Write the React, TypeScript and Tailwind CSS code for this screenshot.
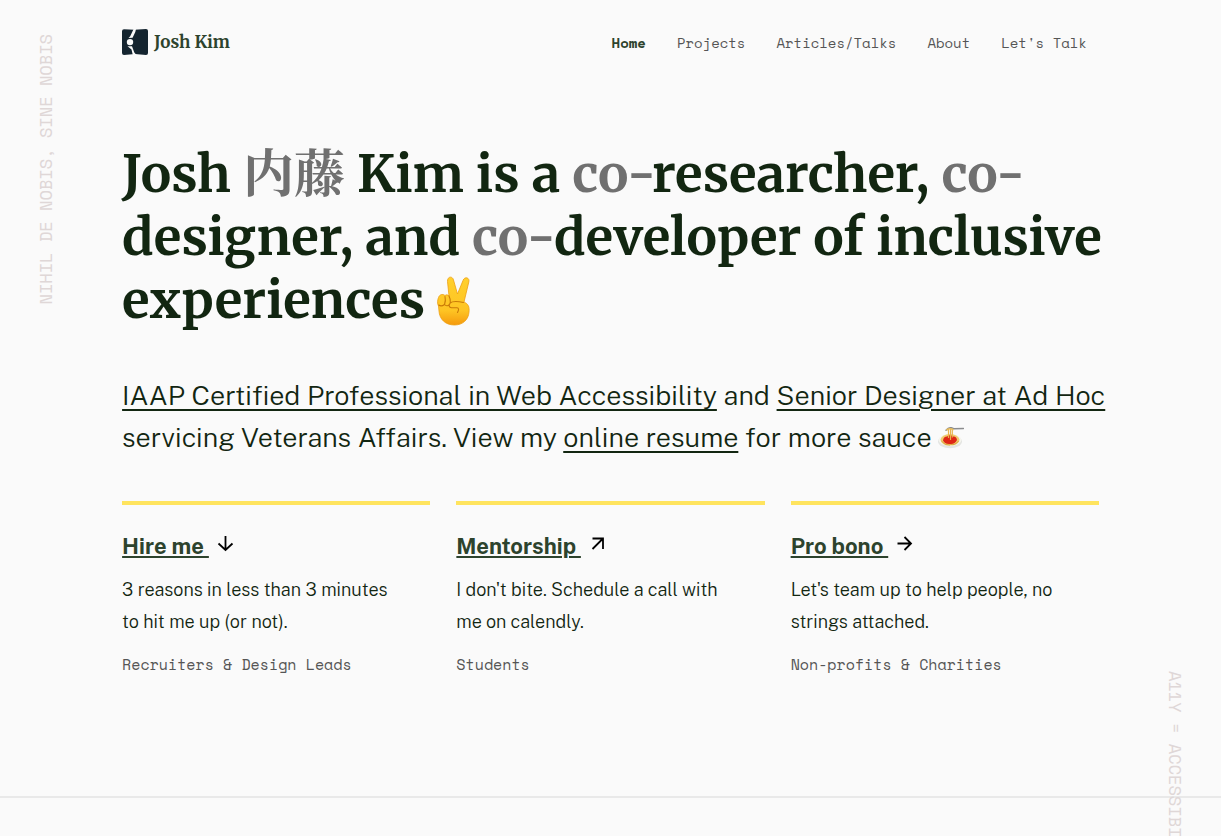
import type { ReactNode } from "react";

const navItems = [
  { label: "Home", href: "#home", current: true },
  { label: "Projects", href: "#projects", current: false },
  { label: "Articles/Talks", href: "#articles", current: false },
  { label: "About", href: "#about", current: false },
  { label: "Let's Talk", href: "#talk", current: false },
];

function Logo() {
  return (
    <svg viewBox="0 0 26 26" className="size-[26px] shrink-0" aria-hidden="true">
      <path
        fill="#14242f"
        d="M2 .3L12.500 .8L24 0Q26 0 26 2V24Q26 26 24 26L13 25L2 26Q0 26 0 24V2.300Q0 .3 2 .3Z"
      />
      <path fill="#fafafa" d="M11.600 0H14L13.300 3L10.600 8.800L6.500 9L8.200 7.300Z" />
      <path fill="#fafafa" d="M5.500 17.300H10L12.300 23.500L14.500 26H10.800L9.500 20.500Z" />
      <circle cx="8" cy="13.100" r="3.200" fill="#fafafa" />
    </svg>
  );
}

function VictoryHand() {
  return (
    <svg viewBox="0 0 34 50" className="inline-block h-[50px] w-[34px] align-[-8px]" role="img" aria-label="Victory hand">
      <defs>
        <linearGradient id="hand" x1="0" y1="0" x2="0" y2="1">
          <stop offset="0" stopColor="#ffd02d" />
          <stop offset="0.7" stopColor="#fec423" />
          <stop offset="1" stopColor="#f59a0d" />
        </linearGradient>
      </defs>
      <path
        fill="url(#hand)"
        stroke="#eda012"
        strokeWidth="0.8"
        d="M12 20L10.500 5.500C10 0.500 15.500 -0.500 16.500 4L20.500 18L26 4.500C27.500 0 33 1.500 31.800 6L27 26C31.500 28 32.500 31 32 36C31.500 43.500 26 49 17.500 49C8 49 2.500 43 2 35L1.500 30C0 27.500 .5 24 1.500 21.500C2.500 18.500 5.500 17.500 8 19.500C9.300 18.500 10.800 18.700 12 20Z"
      />
      <path
        fill="none"
        stroke="#c97a08"
        strokeWidth="1.100"
        strokeLinecap="round"
        d="M8 20.500C8.700 23.500 8.500 26 7.500 28.500C5.500 30 3 30 1.800 29M7.500 28.500C9 30.500 12 30 13 27.500M12 20C13 22 13.500 24 13.300 26M13 27C15.500 25 22 25.500 26.500 26.500M13 27.500C11.500 29.500 12 31.500 14.500 31.800L20 31.800C22 32 22 34 20.500 36.500"
      />
    </svg>
  );
}

function Spaghetti() {
  return (
    <svg viewBox="0 0 26 22" className="inline-block h-[22px] w-[26px] align-[-2px]" role="img" aria-label="Spaghetti">
      <ellipse cx="12" cy="14.500" rx="12" ry="6.800" fill="#e4e5e2" />
      <ellipse cx="12" cy="13" rx="11.500" ry="6" fill="#f6f5ee" />
      <ellipse cx="12" cy="12.800" rx="9.500" ry="5.800" fill="#f0cb70" />
      <path d="M3.500 14Q7 19 12 18M20.500 14Q17 19 12 17" fill="none" stroke="#d9a43e" />
      <path d="M5 13.500Q5.500 9.500 9 9.500Q12 7 15 9.500Q18.500 9 19 13Q17 17.500 12 17Q7 17.500 5 13.500Z" fill="#df2614" />
      <path d="M10.500 2v9M12.500 2v11M14.300 2v8.500" stroke="#e8b34c" strokeWidth="1.200" />
      <path d="M8 3.200Q12 -1 16 1.800L25.500 1.500" fill="none" stroke="#8b8c8e" strokeWidth="1.400" strokeLinecap="round" />
      <path d="M8.500 3Q12 .5 15.500 3" fill="none" stroke="#e6bb5a" strokeWidth="1.600" />
    </svg>
  );
}

const arrowPaths = {
  down: "M10.500 1V15M3.500 8.500L10.500 15L17.500 8.500",
  diagonal: "M5.500 14L15.500 4M5.500 3.500H16V14",
  right: "M3.500 8.500H17M10.500 2L17 8.500L10.500 15",
};

function Arrow({ direction }: { direction: keyof typeof arrowPaths }) {
  return (
    <svg viewBox="0 0 19 19" className="mb-1 size-[19px]" fill="none" stroke="#000" strokeWidth="1.800" aria-hidden="true">
      <path d={arrowPaths[direction]} />
    </svg>
  );
}

function Muted({ children }: { children: ReactNode }) {
  return <span className="text-[#707070]">{children}</span>;
}

const cards: { title: string; href: string; direction: keyof typeof arrowPaths; text: string; audience: string }[] = [
  {
    title: "Hire me",
    href: "#hire",
    direction: "down",
    text: "3 reasons in less than 3 minutes to hit me up (or not).",
    audience: "Recruiters & Design Leads",
  },
  {
    title: "Mentorship",
    href: "#mentorship",
    direction: "diagonal",
    text: "I don't bite. Schedule a call with me on calendly.",
    audience: "Students",
  },
  {
    title: "Pro bono",
    href: "#probono",
    direction: "right",
    text: "Let's team up to help people, no strings attached.",
    audience: "Non-profits & Charities",
  },
];

const leadLink = "underline decoration-2 underline-offset-4";

export default function App() {
  return (
    <div className="relative h-screen overflow-hidden bg-[#fafafa] font-['Public_Sans','Inter',sans-serif] text-[#122611]">
      <p className="absolute top-[34px] left-[34px] rotate-180 font-['Space_Mono','Liberation_Mono',monospace] text-[17px] leading-6 text-[#dfd7d7] [writing-mode:vertical-rl]">
        NIHIL DE NOBIS, SINE NOBIS
      </p>
      <p className="absolute top-[671px] right-[34px] font-['Space_Mono','Liberation_Mono',monospace] text-[17px] leading-6 whitespace-nowrap text-[#dfd7d7] [writing-mode:vertical-rl]">
        A11Y = ACCESSIBILITY
      </p>

      <div className="border-b-2 border-[#e9e9e9] px-[10%] pb-[120px]">
        <header className="flex h-[84px] items-center justify-between pr-3">
          <a href="#home" className="flex items-center gap-1.5 font-['Merriweather','DejaVu_Serif_Condensed',serif] text-[17px] leading-6 font-bold text-[#2d432d]">
            <Logo />
            Josh Kim
          </a>
          <nav className="flex gap-[31px] pt-0.5 font-['Space_Mono','Liberation_Mono',monospace] text-sm">
            {navItems.map((item) => (
              <a
                key={item.label}
                href={item.href}
                aria-current={item.current ? "page" : undefined}
                className={item.current ? "font-bold text-[#2d432d]" : "text-[#555]"}
              >
                {item.label}
              </a>
            ))}
          </nav>
        </header>

        <main>
          <h1 className="mt-[59px] font-['Merriweather','DejaVu_Serif_Condensed','Noto_Serif_CJK_JP','Noto_Serif_JP','Noto_Sans_CJK_JP',serif] text-[51px] leading-[63px] font-bold lg:whitespace-nowrap">
            Josh <Muted>内藤</Muted> Kim is a <Muted>co-</Muted>researcher, <Muted>co-</Muted>
            <br />
            designer, and <Muted>co-</Muted>developer of inclusive
            <br />
            experiences <VictoryHand />
          </h1>

          <p className="mt-[42px] text-[27px] leading-[42px] font-light lg:whitespace-nowrap">
            <a href="#iaap" className={leadLink}>IAAP Certified Professional in Web Accessibility</a> and{" "}
            <a href="#adhoc" className={leadLink}>Senior Designer at Ad Hoc</a>
            <br />
            servicing Veterans Affairs. View my <a href="#resume" className={leadLink}>online resume</a> for more sauce{" "}
            <Spaghetti />
          </p>

          <section className="mt-[43px] grid grid-cols-3 gap-[26px]">
            {cards.map((card) => (
              <article key={card.title} className="border-t-4 border-[#ffe45e] pt-[25px]">
                <h2 className="flex items-center gap-1.5 text-[22px] leading-8 font-bold text-[#2d432d]">
                  <a href={card.href} className="whitespace-pre underline decoration-2 underline-offset-2">
                    {card.title + " "}
                  </a>
                  <Arrow direction={card.direction} />
                </h2>
                <p className="mt-3 pr-6 text-[18px] leading-8 font-light">{card.text}</p>
                <p className="mt-[14px] font-['Space_Mono','Liberation_Mono',monospace] text-[15px] leading-6 text-[#555]">{card.audience}</p>
              </article>
            ))}
          </section>
        </main>
      </div>
    </div>
  );
}
